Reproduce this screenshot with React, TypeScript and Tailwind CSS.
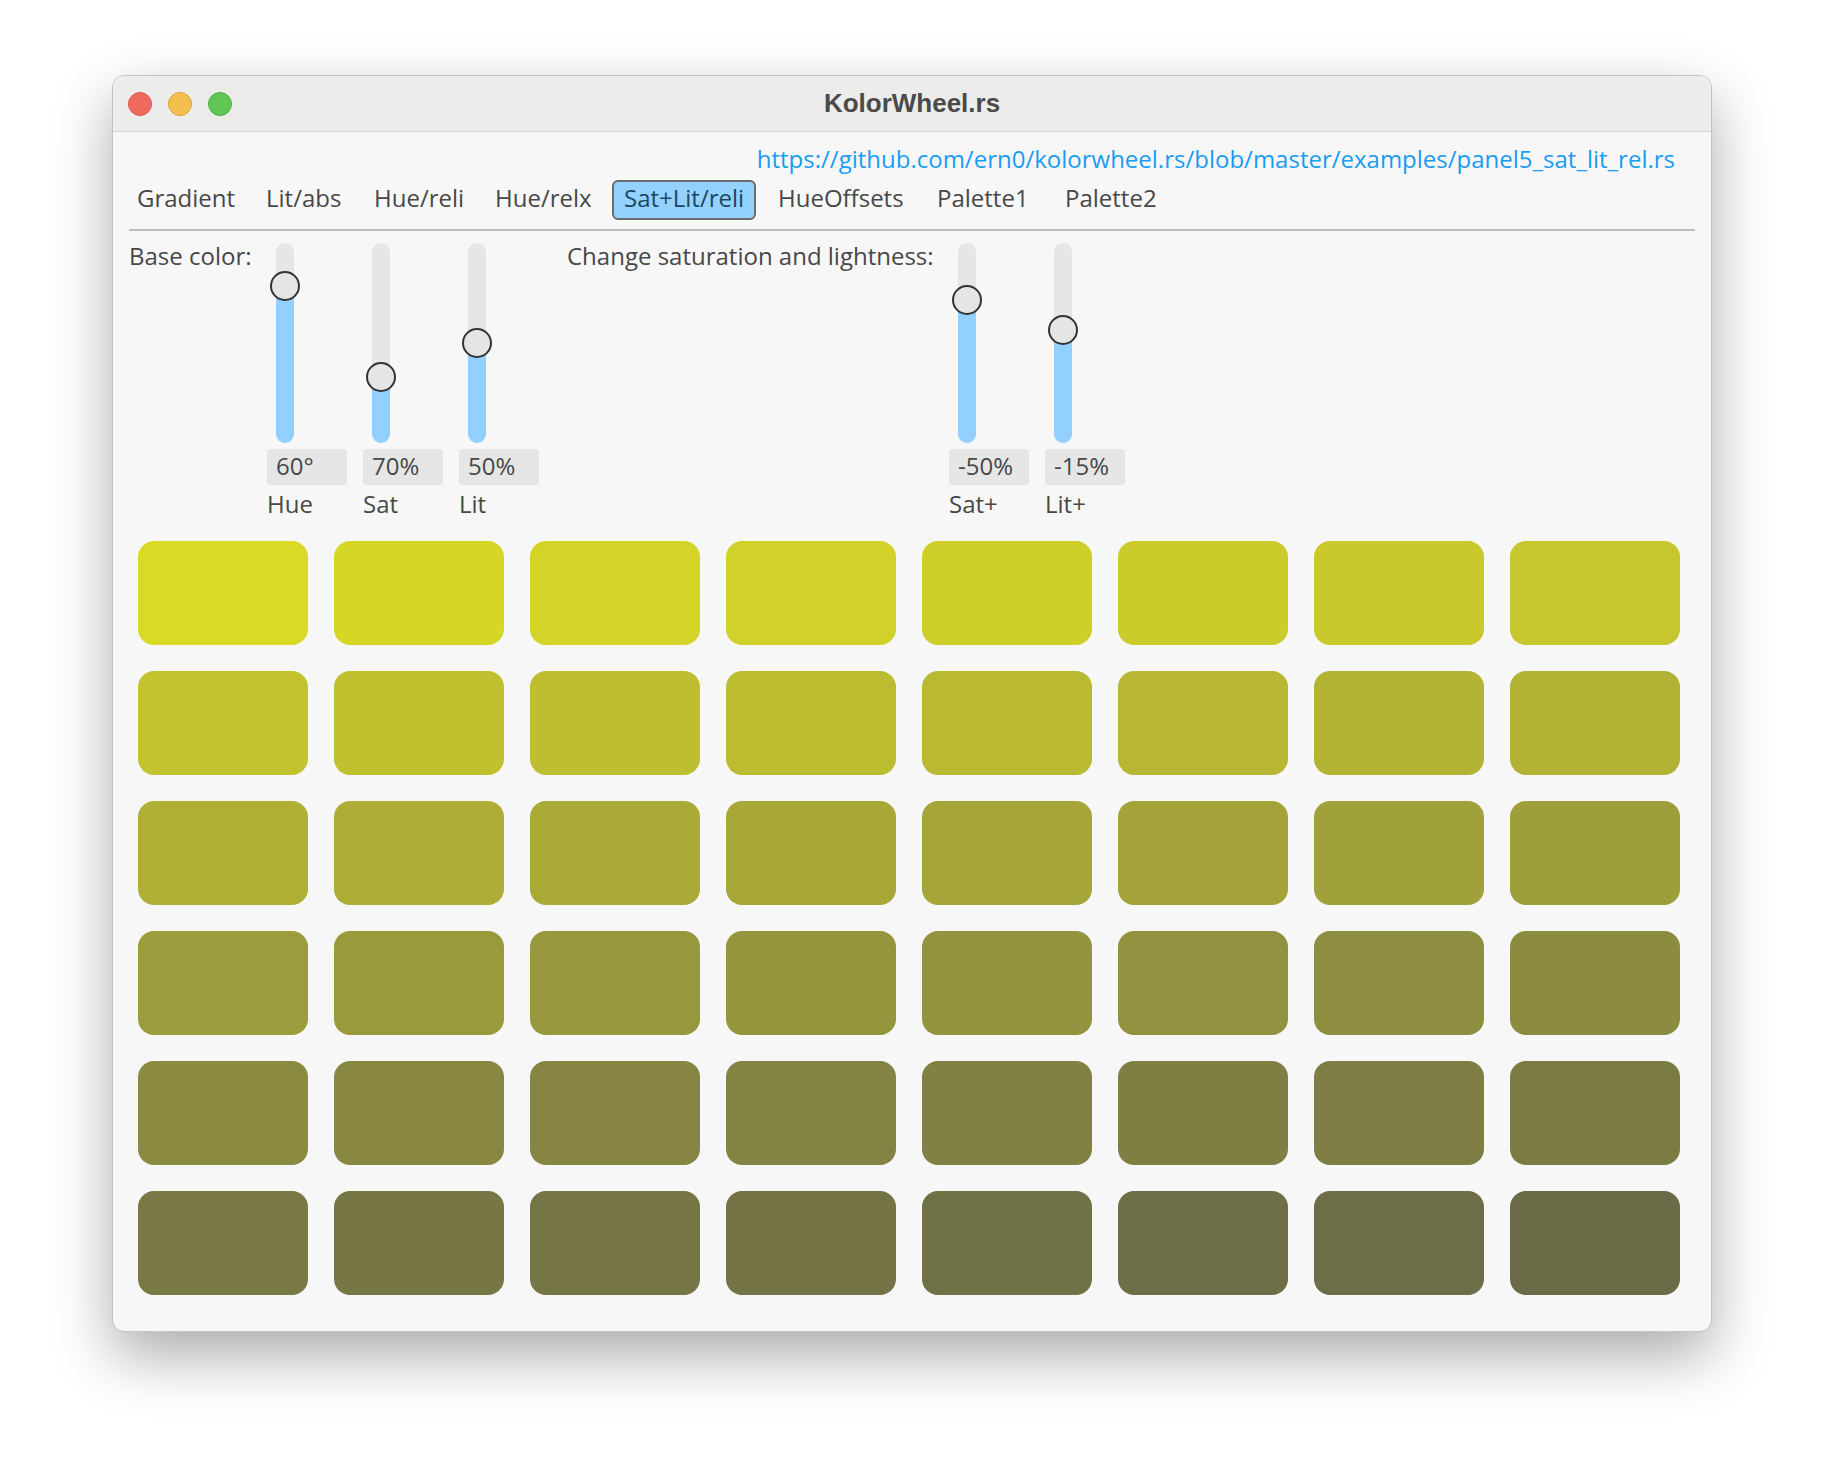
import React from 'react';

const tabs = [
  { name: 'Gradient', w: 'w-[129px]' },
  { name: 'Lit/abs', w: 'w-[108px]' },
  { name: 'Hue/reli', w: 'w-[121px]' },
  { name: 'Hue/relx', w: 'w-[129px]' },
  { name: 'Sat+Lit/reli', w: 'w-[144px] mr-[10px]' },
  { name: 'HueOffsets', w: 'w-[159px]' },
  { name: 'Palette1', w: 'w-[128px]' },
  { name: 'Palette2', w: 'w-[120px]' },
];

interface SliderProps {
  knob: number; // knob centre, px from track top
  value: string;
  label: string;
}

function Slider({ knob, value, label }: SliderProps) {
  return (
    <div className="flex flex-col w-[80px]">
      <div className="relative h-[200px] w-[18px] ml-[9px] rounded-full bg-[#e6e6e6]">
        <div
          className="absolute left-0 right-0 bottom-0 rounded-b-full bg-[#91d0ff]"
          style={{ top: knob }}
        />
        <div
          className="absolute left-[-6px] w-[30px] h-[30px] rounded-full bg-[#e5e5e5] border-2 border-[#333333]"
          style={{ top: knob - 15 }}
        />
      </div>
      <div className="mt-[6px] h-[36px] rounded-[4px] bg-[#e6e6e6] pl-[9px] leading-[34px]">{value}</div>
      <div className="mt-[6px] leading-[26px]">{label}</div>
    </div>
  );
}

// kolorwheel: base hsl(60,70%,50%), sat -50%, lit -15% over 48 cells
const cells = Array.from({ length: 48 }, (_, i) => {
  const s = 70 - (50 * i) / 47;
  const l = 50 - (15 * i) / 47;
  return `hsl(60, ${s}%, ${l}%)`;
});

export default function App() {
  return (
    <div className="w-[1824px] h-[1480px] bg-white pt-[75px]" style={{ fontFamily: '"Open Sans", "Noto Sans", sans-serif' }}>
      <div className="mx-auto w-[1600px] rounded-[12px] border border-[#c3c3c3] bg-[#f7f7f7] overflow-hidden shadow-[0_24px_60px_rgba(0,0,0,0.33)]">
        {/* title bar */}
        <div className="relative h-[56px] bg-[#ececeb] border-b border-[#d4d4d4] flex items-center">
          <div className="flex gap-[16px] pl-[15px]">
            <span className="w-[24px] h-[24px] rounded-full bg-[#ee6a5f] border border-[#d65a4f]" />
            <span className="w-[24px] h-[24px] rounded-full bg-[#f5bf4f] border border-[#d9a53d]" />
            <span className="w-[24px] h-[24px] rounded-full bg-[#61c555] border border-[#4fae44]" />
          </div>
          <div
            className="absolute inset-0 flex items-center justify-center text-[26px] font-bold text-[#4a4a4a]"
            style={{ fontFamily: '"Liberation Sans", Arial, sans-serif' }}
          >
            KolorWheel.rs
          </div>
        </div>

        {/* content */}
        <div className="px-3 pt-[12px] pb-[36px] text-[24px] text-[#484848]">
          <div className="flex justify-end pr-[24px] h-[32px] leading-[30px] text-[#1a9cf2]">
            https://github.com/ern0/kolorwheel.rs/blob/master/examples/panel5_sat_lit_rel.rs
          </div>

          <div className="flex mt-[4px]">
            {tabs.map((t) => (
              <div key={t.name} className={t.w}>
                <div
                  className={
                    t.name === 'Sat+Lit/reli'
                      ? 'h-[40px] pl-[10px] leading-[32px] rounded-[6px] border-2 border-[#6a6a6a] bg-[#93d1ff] text-[#1c4763]'
                      : 'h-[40px] pl-[10px] leading-[32px] rounded-[6px] border-2 border-transparent'
                  }
                >
                  {t.name}
                </div>
              </div>
            ))}
          </div>

          <div className="mx-1 mt-[9px] h-[2px] bg-[#bdbdbd]" />

          <div className="flex mt-[12px]">
            <div className="w-[142px] pl-1 leading-[26px]">Base color:</div>
            <div className="flex gap-4">
              <Slider knob={43} value="60°" label="Hue" />
              <Slider knob={134} value="70%" label="Sat" />
              <Slider knob={100} value="50%" label="Lit" />
            </div>
            <div className="w-[410px] pl-[28px] leading-[26px]">Change saturation and lightness:</div>
            <div className="flex gap-4">
              <Slider knob={57} value="-50%" label="Sat+" />
              <Slider knob={87} value="-15%" label="Lit+" />
            </div>
          </div>

          <div className="grid grid-cols-8 gap-[26px] w-[1542px] ml-[13px] mt-[24px]">
            {cells.map((c, i) => (
              <div key={i} className="h-[104px] rounded-[16px]" style={{ backgroundColor: c }} />
            ))}
          </div>
        </div>
      </div>
    </div>
  );
}
